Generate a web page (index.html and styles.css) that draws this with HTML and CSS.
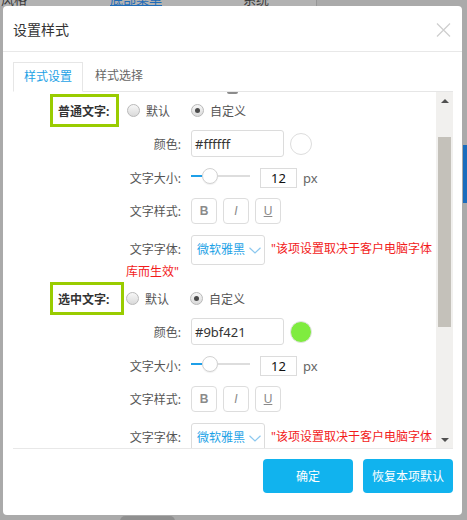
FILE: index.html
```html
<!DOCTYPE html>
<html lang="zh-CN">
<head>
<meta charset="utf-8">
<title>设置样式</title>
<link rel="stylesheet" href="styles.css">
</head>
<body>
<div class="bg">
  <div class="bg-nav">
    <span class="nav-item nav-1">风格</span>
    <span class="nav-item nav-2">底部菜单</span>
    <span class="nav-item nav-3">系统</span>
    <span class="nav-item nav-4"></span>
  </div>
  <div class="bg-mid">
    <div class="bg-main"></div>
    <div class="bg-side"><div class="bg-blue"></div></div>
  </div>
  <div class="bg-bottom"><div class="bg-pill"></div></div>
</div>

<div class="modal">
  <div class="modal-head">
    <span class="title">设置样式</span>
    <svg class="close" width="15" height="14" viewBox="0 0 15 14"><path d="M1 0.5L14 13.5M14 0.5L1 13.5" stroke="#cfcfcf" stroke-width="1.3" fill="none"/></svg>
  </div>
  <div class="modal-body">
    <div class="tabs">
      <div class="tab active">样式设置</div>
      <div class="tab">样式选择</div>
    </div>
    <div class="scroll">
      <div class="scroll-content">
        <div class="sliver"></div>

        <div class="section">
          <div class="row-head">
            <div class="hl">普通文字:</div>
            <label class="radio"><span class="dot"></span>默认</label>
            <label class="radio second"><span class="dot checked"></span>自定义</label>
          </div>
          <div class="field field-color">
            <span class="label">颜色:</span>
            <div class="input-color">#ffffff</div>
            <span class="swatch"></span>
          </div>
          <div class="field field-size">
            <span class="label">文字大小:</span>
            <div class="slider"><span class="fill"></span><span class="knob"></span><span class="rest"></span></div>
            <div class="num">12</div>
            <span class="unit">px</span>
          </div>
          <div class="field field-style">
            <span class="label">文字样式:</span>
            <span class="fmt fmt-b">B</span>
            <span class="fmt fmt-i">I</span>
            <span class="fmt fmt-u">U</span>
          </div>
          <div class="field-font">
            <span class="label">文字字体:</span><span class="select">微软雅黑<svg class="chev" width="12" height="7" viewBox="0 0 12 7"><path d="M0.5 0.8L6 6L11.5 0.8" stroke="#8cc8ef" stroke-width="1.2" fill="none"/></svg></span><span class="note">"该项设置取决于客户电脑字体库而生效"</span>
          </div>
        </div>

        <div class="section section-2">
          <div class="row-head">
            <div class="hl wide">选中文字:</div>
            <label class="radio near"><span class="dot"></span>默认</label>
            <label class="radio second"><span class="dot checked"></span>自定义</label>
          </div>
          <div class="field field-color">
            <span class="label">颜色:</span>
            <div class="input-color">#9bf421</div>
            <span class="swatch green"></span>
          </div>
          <div class="field field-size">
            <span class="label">文字大小:</span>
            <div class="slider"><span class="fill"></span><span class="knob"></span><span class="rest"></span></div>
            <div class="num">12</div>
            <span class="unit">px</span>
          </div>
          <div class="field field-style">
            <span class="label">文字样式:</span>
            <span class="fmt fmt-b">B</span>
            <span class="fmt fmt-i">I</span>
            <span class="fmt fmt-u">U</span>
          </div>
          <div class="field-font">
            <span class="label">文字字体:</span><span class="select">微软雅黑<svg class="chev" width="12" height="7" viewBox="0 0 12 7"><path d="M0.5 0.8L6 6L11.5 0.8" stroke="#8cc8ef" stroke-width="1.2" fill="none"/></svg></span><span class="note">"该项设置取决于客户电脑字体库而生效"</span>
          </div>
        </div>
      </div>
      <div class="scrollbar">
        <div class="sb-btn"><span class="tri-up"></span></div>
        <div class="sb-track"><div class="sb-thumb"></div></div>
        <div class="sb-btn"><span class="tri-down"></span></div>
      </div>
    </div>
    <div class="footer">
      <button class="btn">确定</button>
      <button class="btn">恢复本项默认</button>
    </div>
  </div>
</div>
</body>
</html>
```

FILE: styles.css
```css
* { box-sizing: border-box; }

body {
  margin: 0;
  width: 467px;
  height: 520px;
  overflow: hidden;
  position: relative;
  background: #aaaaaa;
  font-family: "Noto Sans", "Noto Sans CJK SC", sans-serif;
}

/* background page behind the mask */
.bg {
  height: 520px;
  display: flex;
  flex-direction: column;
}
.bg-nav {
  height: 6px;
  display: flex;
  overflow: hidden;
  font-size: 13px;
  line-height: 14px;
}
.nav-item { display: block; margin-top: -8px; height: 20px; }
.nav-1 { width: 110px; color: #3a3a3a; padding-left: 1px; background: #b2b2b2; }
.nav-2 { width: 133px; color: #1f6cb8; text-decoration: underline; background: #b2b2b2; }
.nav-3 { width: 73px; color: #3a3a3a; background: #b2b2b2; }
.nav-4 { flex: 1; border-left: 1px solid #969696; background: #aaaaaa; }
.bg-mid { flex: 1; display: flex; }
.bg-main { flex: 1; }
.bg-side { width: 4px; }
.bg-blue { margin-top: 139px; height: 58px; background: #1a6cbd; }
.bg-bottom { height: 5px; }
.bg-pill { margin-left: 120px; width: 55px; height: 10px; border-radius: 6px; background: #8f8f8f; margin-top: 1px; }

/* modal */
.modal {
  position: absolute;
  left: 3px;
  top: 6px;
  width: 459px;
  height: 509px;
  background: #fff;
  border-radius: 4px;
  display: flex;
  flex-direction: column;
}
.modal-head {
  height: 46px;
  flex: none;
  border-bottom: 1px solid #e8e8e8;
  display: flex;
  align-items: center;
  justify-content: space-between;
  padding: 0 11px 0 10px;
}
.title { font-size: 14px; color: #333; }
.close { display: block; margin-top: 2px; }

.modal-body { padding: 10px 9px 0 10px; }

.tabs {
  display: flex;
  height: 30px;
  border-bottom: 1px solid #e6e6e6;
}
.tab {
  font-size: 12px;
  color: #666;
  line-height: 28px;
  padding-left: 12px;
}
.tab.active {
  width: 70px;
  height: 30px;
  padding: 0;
  text-align: center;
  color: #1da2e6;
  border: 1px solid #e6e6e6;
  border-bottom-color: #fff;
}

.scroll {
  display: flex;
  height: 357px;
  border-bottom: 1px solid #e8e8e8;
}
.scroll-content {
  flex: 1;
  overflow: hidden;
}
.scrollbar {
  width: 17px;
  background: #f1f0ee;
  display: flex;
  flex-direction: column;
}
.sb-btn {
  height: 17px;
  display: flex;
  align-items: center;
  justify-content: center;
}
.tri-up {
  width: 0; height: 0;
  border-left: 4px solid transparent;
  border-right: 4px solid transparent;
  border-bottom: 4px solid #505050;
}
.tri-down {
  width: 0; height: 0;
  border-left: 4px solid transparent;
  border-right: 4px solid transparent;
  border-top: 4px solid #505050;
}
.sb-track { flex: 1; padding: 28px 2px 0 2px; }
.sb-thumb { height: 190px; background: #c4c1ba; }

.sliver {
  width: 11px;
  height: 2px;
  margin-left: 214px;
  background: #8c8c8c;
  border-radius: 0 0 4px 4px;
}

.section { padding-left: 37px; }
.section-2 { margin-top: 3px; }

.row-head {
  display: flex;
  align-items: center;
  height: 33px;
}
.hl {
  width: 69px;
  height: 33px;
  margin-right: 8px;
  border: 3px solid #99cc00;
  padding-left: 5px;
  display: flex;
  align-items: center;
  font-size: 12px;
  font-weight: bold;
  color: #333;
  white-space: nowrap;
}
.hl.wide { width: 74px; margin-right: 2px; }

.radio {
  display: flex;
  align-items: center;
  font-size: 12px;
  color: #555;
}
.radio.second { margin-left: 21px; }
.dot {
  width: 13px;
  height: 13px;
  border-radius: 50%;
  border: 1px solid #b9b9b9;
  background: linear-gradient(#f7f7f7, #dadada);
  margin-right: 6px;
  display: flex;
  align-items: center;
  justify-content: center;
}
.dot.checked::after {
  content: "";
  width: 5px;
  height: 5px;
  border-radius: 50%;
  background: #4a4a4a;
}

.field {
  display: flex;
  align-items: center;
  margin-left: 76px;
}
.label {
  width: 55px;
  margin-right: 10px;
  text-align: right;
  font-size: 12px;
  color: #555;
  white-space: nowrap;
}
.field-color { height: 27px; margin-top: 3px; }
.input-color {
  width: 93px;
  height: 27px;
  border: 1px solid #dcdcdc;
  border-radius: 3px;
  padding-left: 3px;
  display: flex;
  align-items: center;
  font-size: 13px;
  color: #333;
}
.swatch {
  width: 22px;
  height: 22px;
  margin-left: 6px;
  border-radius: 50%;
  border: 1px solid #dddddd;
  background: #fff;
}
.swatch.green { background: #7fec3f; border-color: #e4e4e4; }

.field-size { height: 20px; margin-top: 11px; }
.slider {
  width: 59px;
  height: 16px;
  align-self: flex-start;
  display: flex;
  align-items: center;
}
.fill { width: 11px; height: 2px; background: #1e9fe8; }
.knob {
  width: 16px;
  height: 16px;
  border-radius: 50%;
  border: 1px solid #d2d2d2;
  background: #fff;
  box-shadow: 0 1px 1px rgba(0,0,0,0.06);
}
.rest { flex: 1; height: 2px; background: #dddddd; }
.num {
  width: 37px;
  height: 20px;
  margin-left: 10px;
  border: 1px solid #dcdcdc;
  font-size: 13px;
  color: #111;
  display: flex;
  align-items: center;
  justify-content: center;
}
.unit { margin-left: 6px; font-size: 13px; color: #666; }

.field-style { height: 26px; margin-top: 10px; }
.fmt {
  width: 26px;
  height: 26px;
  margin-right: 6px;
  border: 1px solid #dddddd;
  border-radius: 4px;
  display: flex;
  align-items: center;
  justify-content: center;
  font-family: "Liberation Sans", sans-serif;
  font-size: 12px;
  color: #8a8a8a;
}
.fmt-b { font-weight: bold; }
.fmt-i { font-style: italic; font-weight: normal; }
.fmt-u { text-decoration: underline; }

.field-font {
  margin-left: 76px;
  margin-top: 11px;
  width: 310px;
  font-size: 12px;
  line-height: 14px;
}
.field-font .label { display: inline-block; vertical-align: middle; }
.select {
  display: inline-flex;
  align-items: center;
  justify-content: space-between;
  vertical-align: middle;
  width: 74px;
  height: 30px;
  padding: 0 3px 0 5px;
  border: 1px solid #dcdcdc;
  border-radius: 3px;
  color: #1da2e6;
  font-size: 12px;
}
.chev { display: block; margin-top: 1px; }
.note { color: #f21b1b; margin-left: 6px; }

.footer {
  display: flex;
  justify-content: flex-end;
  gap: 10px;
  padding-top: 10px;
}
.btn {
  width: 90px;
  height: 34px;
  border: none;
  border-radius: 4px;
  background: #11b3ee;
  color: #fff;
  font-family: "Noto Sans", "Noto Sans CJK SC", sans-serif;
  font-size: 12px;
  padding: 0;
}
```
